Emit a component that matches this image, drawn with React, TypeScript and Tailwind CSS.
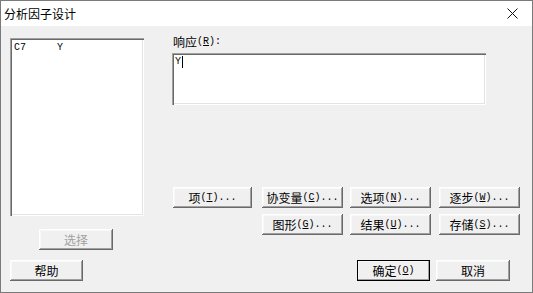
import React from "react";

const cjk = "font-['Noto_Sans_CJK_SC',sans-serif]";
const mono = "font-['Liberation_Mono',monospace]";

const raised =
  "shadow-[inset_-1px_-1px_0_#696969,inset_1px_1px_0_#ffffff,inset_-2px_-2px_0_#a0a0a0,inset_2px_2px_0_#f8f8f8]";
const sunken =
  "shadow-[inset_1px_1px_0_#a0a0a0,inset_2px_2px_0_#696969,inset_-1px_-1px_0_#ffffff,inset_-2px_-2px_0_#e3e3e3]";

function Caption({ zh, key1, dots }: { zh: string; key1?: string; dots?: boolean }) {
  return (
    <span className="flex items-center leading-none">
      <span className={`${cjk} text-[12px]`}>{zh}</span>
      {key1 ? (
        <span className={`${mono} text-[10px]`}>
          (<span className="underline">{key1}</span>){dots ? "..." : ""}
        </span>
      ) : null}
    </span>
  );
}

function Btn({
  w,
  children,
  disabled,
  isDefault,
}: {
  w: string;
  children: React.ReactNode;
  disabled?: boolean;
  isDefault?: boolean;
}) {
  return (
    <div
      className={`${w} flex h-[21px] shrink-0 items-center justify-center bg-[#f0f0f0] ${raised} ${
        disabled ? "text-[#a0a0a0]" : "text-black"
      } ${isDefault ? "outline outline-1 -outline-offset-1 outline-black" : ""}`}
    >
      {children}
    </div>
  );
}

export default function App() {
  return (
    <div className="flex h-[293px] w-[533px] flex-col border border-[#7a7a7a] bg-[#f0f0f0] text-black">
      <div className="flex h-[25px] shrink-0 items-center justify-between bg-white pl-[3px] pr-[14px]">
        <span className={`${cjk} text-[12px]`}>分析因子设计</span>
        <svg width="11" height="11" viewBox="0 0 11 11">
          <path d="M0.5 0.5 L10.5 10.5 M10.5 0.5 L0.5 10.5" stroke="#111" strokeWidth="1" />
        </svg>
      </div>

      <div className="flex flex-1 flex-col pl-[9px]">
        <div className="mt-[9px] flex">
          <div className="flex w-[134px] flex-col">
            <div className={`mt-[3px] h-[178px] bg-white px-[4px] pt-[4px] ${sunken}`}>
              <div className={`${mono} flex text-[10px] leading-[12px]`}>
                <span className="w-[43px]">C7</span>
                <span>Y</span>
              </div>
            </div>
            <div className="ml-[29px] mt-[13px]">
              <Btn w="w-[74px]" disabled>
                <Caption zh="选择" />
              </Btn>
            </div>
          </div>

          <div className="ml-[28px] flex flex-col">
            <div className="flex h-[14px] items-center pl-[1px]">
              <span className={`${cjk} text-[12px] leading-none`}>响应</span>
              <span className={`${mono} text-[10px] leading-none`}>
                (<span className="underline">R</span>):
              </span>
            </div>
            <div className={`mt-[4px] h-[52px] w-[314px] bg-white px-[3px] pt-[3px] ${sunken}`}>
              <div className={`${mono} flex items-center text-[10px] leading-[12px]`}>
                Y<span className="ml-[1px] inline-block h-[12px] w-px bg-black" />
              </div>
            </div>

            <div className="mt-[82px] flex pl-[1px]">
              <Btn w="w-[79px]">
                <Caption zh="项" key1="T" dots />
              </Btn>
              <div className="ml-[10px]">
                <Btn w="w-[81px]">
                  <Caption zh="协变量" key1="C" dots />
                </Btn>
              </div>
              <div className="ml-[7px]">
                <Btn w="w-[81px]">
                  <Caption zh="选项" key1="N" dots />
                </Btn>
              </div>
              <div className="ml-[8px]">
                <Btn w="w-[81px]">
                  <Caption zh="逐步" key1="W" dots />
                </Btn>
              </div>
            </div>
            <div className="mt-[6px] flex pl-[90px]">
              <Btn w="w-[81px]">
                <Caption zh="图形" key1="G" dots />
              </Btn>
              <div className="ml-[7px]">
                <Btn w="w-[81px]">
                  <Caption zh="结果" key1="U" dots />
                </Btn>
              </div>
              <div className="ml-[8px]">
                <Btn w="w-[81px]">
                  <Caption zh="存储" key1="S" dots />
                </Btn>
              </div>
            </div>
          </div>
        </div>

        <div className="mt-[10px] flex items-center">
          <Btn w="w-[73px]">
            <Caption zh="帮助" />
          </Btn>
          <div className="ml-[274px]">
            <Btn w="w-[73px]" isDefault>
              <Caption zh="确定" key1="O" />
            </Btn>
          </div>
          <div className="ml-[6px]">
            <Btn w="w-[74px]">
              <Caption zh="取消" />
            </Btn>
          </div>
        </div>
      </div>
    </div>
  );
}
